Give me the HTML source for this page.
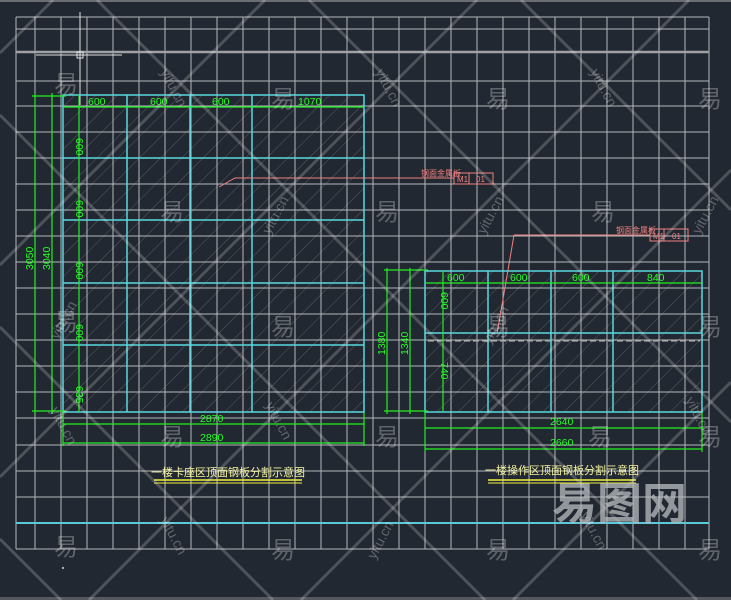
<!DOCTYPE html>
<html><head><meta charset="utf-8"><style>
html,body{margin:0;padding:0;background:#222831;}
svg{display:block}
.d{fill:#22ff22;font-family:"Liberation Sans",sans-serif;font-size:10.5px}
.w{fill:#fff;fill-opacity:.28;font-family:"Liberation Sans","Noto Sans CJK SC",sans-serif}
</style></head><body>
<svg width="731" height="600" viewBox="0 0 731 600" xmlns="http://www.w3.org/2000/svg">
<defs>
<pattern id="h" width="15" height="15" patternUnits="userSpaceOnUse" patternTransform="rotate(45)">
<line x1="0" y1="0" x2="0" y2="15" stroke="#e8e8e8" stroke-width="0.6" stroke-opacity="0.45"/>
</pattern>
</defs>
<rect width="731" height="600" fill="#222831"/>
<rect width="731" height="2" fill="#6a6e72"/>
<rect y="597" width="731" height="3" fill="#55595e"/>
<g stroke="#b4b8bc" stroke-width="1">
<line x1="16" y1="17" x2="16" y2="549"/><line x1="35" y1="17" x2="35" y2="549"/>
<line x1="61" y1="17" x2="61" y2="549"/><line x1="87" y1="17" x2="87" y2="549"/>
<line x1="113" y1="17" x2="113" y2="549"/><line x1="139" y1="17" x2="139" y2="549"/>
<line x1="165" y1="17" x2="165" y2="549"/><line x1="191" y1="17" x2="191" y2="549"/>
<line x1="217" y1="17" x2="217" y2="549"/><line x1="243" y1="17" x2="243" y2="549"/>
<line x1="269" y1="17" x2="269" y2="549"/><line x1="295" y1="17" x2="295" y2="549"/>
<line x1="321" y1="17" x2="321" y2="549"/><line x1="347" y1="17" x2="347" y2="549"/>
<line x1="373" y1="17" x2="373" y2="549"/><line x1="399" y1="17" x2="399" y2="549"/>
<line x1="425" y1="17" x2="425" y2="549"/><line x1="451" y1="17" x2="451" y2="549"/>
<line x1="477" y1="17" x2="477" y2="549"/><line x1="503" y1="17" x2="503" y2="549"/>
<line x1="529" y1="17" x2="529" y2="549"/><line x1="555" y1="17" x2="555" y2="549"/>
<line x1="581" y1="17" x2="581" y2="549"/><line x1="607" y1="17" x2="607" y2="549"/>
<line x1="633" y1="17" x2="633" y2="549"/><line x1="659" y1="17" x2="659" y2="549"/>
<line x1="685" y1="17" x2="685" y2="549"/><line x1="709" y1="17" x2="709" y2="549"/>
<line x1="16" y1="17" x2="709" y2="17"/><line x1="16" y1="29" x2="709" y2="29"/>
<line x1="16" y1="52" x2="709" y2="52" stroke-width="2.5" stroke="#9ea2a6"/>
<line x1="16" y1="81" x2="709" y2="81"/>
<line x1="16" y1="106" x2="709" y2="106"/><line x1="16" y1="132" x2="709" y2="132"/>
<line x1="16" y1="158" x2="709" y2="158"/><line x1="16" y1="184" x2="709" y2="184"/>
<line x1="16" y1="210" x2="709" y2="210"/><line x1="16" y1="236" x2="709" y2="236"/>
<line x1="16" y1="262" x2="709" y2="262"/><line x1="16" y1="288" x2="709" y2="288"/>
<line x1="16" y1="314" x2="709" y2="314"/><line x1="16" y1="340" x2="709" y2="340"/>
<line x1="16" y1="366" x2="709" y2="366"/><line x1="16" y1="392" x2="709" y2="392"/>
<line x1="16" y1="418" x2="709" y2="418"/><line x1="16" y1="445" x2="709" y2="445"/>
<line x1="16" y1="471" x2="709" y2="471"/><line x1="16" y1="497" x2="709" y2="497"/>
<line x1="16" y1="549" x2="709" y2="549"/>
</g>
<line x1="16" y1="523" x2="709" y2="523" stroke="#5cc8d8" stroke-width="2"/>
<g stroke="#e0e0e0" stroke-width="1">
<line x1="80" y1="12" x2="80" y2="105"/><line x1="36" y1="55" x2="122" y2="55"/>
<rect x="77" y="52" width="6" height="6" fill="none"/>
</g>
<rect x="63" y="95" width="301" height="317" fill="url(#h)"/>
<g stroke="#5ad8e0" stroke-width="1.5" fill="none">
<rect x="63" y="95" width="301" height="317"/>
<line x1="127" y1="95" x2="127" y2="412"/><line x1="190" y1="95" x2="190" y2="412"/><line x1="252" y1="95" x2="252" y2="412"/>
<line x1="63" y1="158" x2="364" y2="158"/><line x1="63" y1="220" x2="364" y2="220"/>
<line x1="63" y1="283" x2="364" y2="283"/><line x1="63" y1="345" x2="364" y2="345"/>
</g>
<g stroke="#22ee22" stroke-width="1.2" fill="none">
<line x1="63" y1="107" x2="364" y2="107"/>
<line x1="35" y1="93" x2="35" y2="414"/><line x1="52" y1="93" x2="52" y2="414"/><line x1="79" y1="95" x2="79" y2="412"/>
<line x1="32" y1="96" x2="66" y2="96"/><line x1="32" y1="411" x2="66" y2="411"/>
<line x1="63" y1="424" x2="364" y2="424"/><line x1="63" y1="443" x2="364" y2="443"/>
<line x1="63" y1="412" x2="63" y2="446"/><line x1="364" y1="412" x2="364" y2="446"/>
</g>
<g class="d">
<text x="88" y="105">600</text><text x="150" y="105">600</text><text x="212" y="105">600</text><text x="298" y="105">1070</text>
<text x="200" y="422">2870</text><text x="200" y="441">2890</text>
<text transform="translate(76,138) rotate(90)">600</text>
<text transform="translate(76,200) rotate(90)">600</text>
<text transform="translate(76,262) rotate(90)">600</text>
<text transform="translate(76,324) rotate(90)">600</text>
<text transform="translate(76,386) rotate(90)">635</text>
<text transform="translate(33,270) rotate(-90)">3050</text>
<text transform="translate(50,270) rotate(-90)">3040</text>
</g>
<text x="228" y="476" text-anchor="middle" font-family="Liberation Sans,Noto Sans CJK SC,sans-serif" font-size="11" fill="#f4f4a0">一楼卡座区顶面钢板分割示意图</text>
<line x1="154" y1="480" x2="302" y2="480" stroke="#f0f040" stroke-width="1.5"/>
<line x1="154" y1="483" x2="302" y2="483" stroke="#f0f040" stroke-width="1"/>
<rect x="425" y="271" width="277" height="141" fill="url(#h)"/>
<line x1="428" y1="341" x2="700" y2="341" stroke="#a0a0a0" stroke-width="1.2" stroke-dasharray="6 3"/>
<g stroke="#5ad8e0" stroke-width="1.5" fill="none">
<rect x="425" y="271" width="277" height="141"/>
<line x1="488" y1="271" x2="488" y2="412"/><line x1="551" y1="271" x2="551" y2="412"/><line x1="613" y1="271" x2="613" y2="412"/>
<line x1="425" y1="333" x2="702" y2="333"/>
</g>
<g stroke="#22ee22" stroke-width="1.2" fill="none">
<line x1="425" y1="283" x2="702" y2="283"/>
<line x1="387" y1="268" x2="387" y2="414"/><line x1="410" y1="268" x2="410" y2="414"/><line x1="443" y1="271" x2="443" y2="412"/>
<line x1="384" y1="270" x2="428" y2="270"/><line x1="384" y1="411" x2="428" y2="411"/>
<line x1="425" y1="428" x2="702" y2="428"/><line x1="425" y1="449" x2="702" y2="449"/>
<line x1="425" y1="412" x2="425" y2="452"/><line x1="702" y1="412" x2="702" y2="452"/>
</g>
<g class="d">
<text x="447" y="281">600</text><text x="510" y="281">600</text><text x="572" y="281">600</text><text x="647" y="281">840</text>
<text x="550" y="425">2640</text><text x="550" y="446">2660</text>
<text transform="translate(441,292) rotate(90)">600</text>
<text transform="translate(441,362) rotate(90)">740</text>
<text transform="translate(385,355) rotate(-90)">1380</text>
<text transform="translate(408,355) rotate(-90)">1340</text>
</g>
<text x="562" y="474" text-anchor="middle" font-family="Liberation Sans,Noto Sans CJK SC,sans-serif" font-size="11" fill="#f4f4a0">一楼操作区顶面钢板分割示意图</text>
<line x1="488" y1="480" x2="636" y2="480" stroke="#f0f040" stroke-width="1.5"/>
<line x1="488" y1="483" x2="636" y2="483" stroke="#f0f040" stroke-width="1"/>
<g stroke="#f08080" stroke-width="1" fill="none">
<polyline points="219,187 235,178 454,178"/>
<rect x="454" y="173" width="39" height="11"/><line x1="469" y1="173" x2="469" y2="184"/>
<polyline points="497,334 514,235 650,235"/>
<rect x="650" y="229" width="38" height="12"/><line x1="664" y1="229" x2="664" y2="241"/>
</g>
<g fill="#f08080" font-family="Liberation Sans,Noto Sans CJK SC,sans-serif" font-size="8">
<text x="421" y="176">钢面金属板</text><text x="457" y="182">M1</text><text x="476" y="182">01</text>
<text x="616" y="233">钢面金属板</text><text x="653" y="239">M1</text><text x="672" y="239">01</text>
</g>
<g stroke="#ffffff" stroke-opacity="0.2" stroke-width="3">
<line x1="53" y1="0" x2="0" y2="53"/><line x1="265" y1="0" x2="0" y2="265"/>
<line x1="477" y1="0" x2="0" y2="477"/><line x1="689" y1="0" x2="89" y2="600"/>
<line x1="731" y1="170" x2="301" y2="600"/><line x1="731" y1="382" x2="513" y2="600"/>
<line x1="97" y1="0" x2="697" y2="600"/><line x1="309" y1="0" x2="731" y2="422"/>
<line x1="521" y1="0" x2="731" y2="210"/><line x1="0" y1="115" x2="485" y2="600"/>
<line x1="0" y1="327" x2="273" y2="600"/><line x1="0" y1="539" x2="61" y2="600"/>
</g>
<g class="w" font-size="24">
<text x="54" y="92">易</text><text x="271" y="107">易</text><text x="486" y="107">易</text><text x="698" y="107">易</text>
<text x="160" y="220">易</text><text x="375" y="220">易</text><text x="591" y="220">易</text>
<text x="54" y="330">易</text><text x="271" y="335">易</text><text x="486" y="335">易</text><text x="698" y="335">易</text>
<text x="160" y="445">易</text><text x="375" y="445">易</text><text x="588" y="445">易</text><text x="698" y="445">易</text>
<text x="54" y="555">易</text><text x="271" y="558">易</text><text x="486" y="558">易</text><text x="698" y="558">易</text>
</g>
<g class="w" font-size="14">
<text transform="translate(160,72) rotate(62)">yitu.cn</text>
<text transform="translate(375,72) rotate(62)">yitu.cn</text>
<text transform="translate(590,72) rotate(62)">yitu.cn</text>
<text transform="translate(58,340) rotate(-62)">yitu.cn</text>
<text transform="translate(270,235) rotate(-62)">yitu.cn</text>
<text transform="translate(485,235) rotate(-62)">yitu.cn</text>
<text transform="translate(700,235) rotate(-62)">yitu.cn</text>
<text transform="translate(490,345) rotate(-62)">yitu.cn</text>
<text transform="translate(50,410) rotate(62)">yitu.cn</text>
<text transform="translate(265,405) rotate(62)">yitu.cn</text>
<text transform="translate(685,400) rotate(62)">yitu.cn</text>
<text transform="translate(160,520) rotate(62)">yitu.cn</text>
<text transform="translate(375,560) rotate(-62)">yitu.cn</text>
<text transform="translate(580,515) rotate(62)">yitu.cn</text>
</g>
<text x="552" y="519" font-family="Liberation Sans,Noto Sans CJK SC,sans-serif" font-size="44" font-weight="bold" fill="#b8bcc0" fill-opacity="0.75" textLength="135" lengthAdjust="spacingAndGlyphs">易图网</text>
<circle cx="63" cy="568" r="1.2" fill="#aaa"/>
</svg>
</body></html>
